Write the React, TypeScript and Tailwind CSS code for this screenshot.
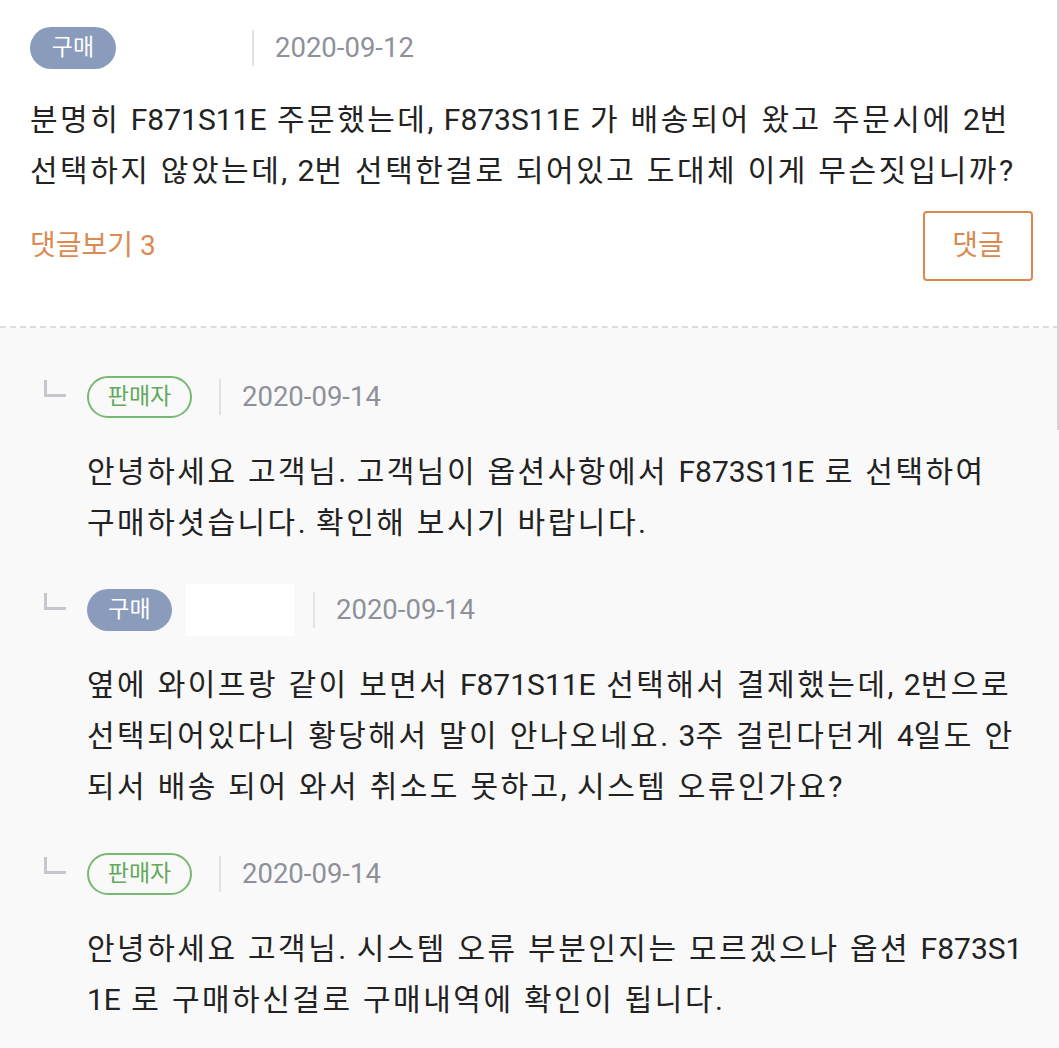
const FONT = "font-['Roboto','Noto_Sans_CJK_KR',sans-serif]";

function BuyerBadge({ small }: { small?: boolean }) {
  return (
    <span
      className={`flex h-[42px] ${small ? "w-[85px]" : "w-[86px]"} items-center justify-center rounded-full bg-[#8a9bbb] text-[23px] text-white`}
    >
      구매
    </span>
  );
}

function SellerBadge() {
  return (
    <span className="flex h-[42px] w-[105px] items-center justify-center rounded-full border-2 border-[#79b873] text-[23px] text-[#62a95c]">
      판매자
    </span>
  );
}

function Divider() {
  return <span className="block h-[36px] w-[2px] bg-[#e2e2e4]" />;
}

function DateText({ children }: { children: string }) {
  return <span className="text-[27.5px] text-[#8e9199]">{children}</span>;
}

function Corner() {
  return <span className="block h-[17px] w-[22px] border-b-[3px] border-l-[3px] border-[#c5c7cd]" />;
}

// hangul runs get a bit of extra tracking, latin stays tight
function Line({ text }: { text: string }) {
  const parts = text.split(/([\uAC00-\uD7A3]+)/);
  return (
    <>
      {parts.map((p, i) =>
        i % 2 === 1 ? (
          <span key={i} className="tracking-[2.5px]">
            {p}
          </span>
        ) : (
          <span key={i}>{p}</span>
        )
      )}
    </>
  );
}

type Reply = {
  seller: boolean;
  date: string;
  lines: string[];
};

const question = [
  "분명히 F871S11E 주문했는데, F873S11E 가 배송되어 왔고 주문시에 2번",
  "선택하지 않았는데, 2번 선택한걸로 되어있고 도대체 이게 무슨짓입니까?",
];

const replies: Reply[] = [
  {
    seller: true,
    date: "2020-09-14",
    lines: [
      "안녕하세요 고객님. 고객님이 옵션사항에서 F873S11E 로 선택하여",
      "구매하셧습니다. 확인해 보시기 바랍니다.",
    ],
  },
  {
    seller: false,
    date: "2020-09-14",
    lines: [
      "옆에 와이프랑 같이 보면서 F871S11E 선택해서 결제했는데, 2번으로",
      "선택되어있다니 황당해서 말이 안나오네요. 3주 걸린다던게 4일도 안",
      "되서 배송 되어 와서 취소도 못하고, 시스템 오류인가요?",
    ],
  },
  {
    seller: true,
    date: "2020-09-14",
    lines: [
      "안녕하세요 고객님. 시스템 오류 부분인지는 모르겠으나 옵션 F873S1",
      "1E 로 구매하신걸로 구매내역에 확인이 됩니다.",
    ],
  },
];

const bodyText =
  "whitespace-nowrap text-[30px] leading-[51px] [word-spacing:3px] text-[#222222]";

function Body({ lines, className }: { lines: string[]; className: string }) {
  return (
    <p className={`${className} ${bodyText}`}>
      {lines.map((l, j) => (
        <span key={j}>
          <Line text={l} />
          {j < lines.length - 1 && <br />}
        </span>
      ))}
    </p>
  );
}

export default function App() {
  return (
    <div className={`relative min-h-[1048px] w-full bg-[#f9f9f9] ${FONT}`}>
      <div className="absolute right-0 top-0 h-[430px] w-[2px] bg-[#d4d4d4]" />

      <section className="border-b-2 border-dashed border-[#dcdcdc] bg-white pb-[45px] pl-[30px] pr-[26px] pt-[27px]">
        <div className="flex h-[42px] items-center">
          <BuyerBadge />
          <span className="ml-[136px]">
            <Divider />
          </span>
          <span className="ml-[21px]">
            <DateText>2020-09-12</DateText>
          </span>
        </div>
        <Body lines={question} className="mt-[25px]" />
        <div className="mt-[15px] flex items-center justify-between">
          <span className="text-[28px] text-[#dc8a52]">댓글보기 3</span>
          <button className="flex h-[70px] w-[110px] items-center justify-center rounded-[4px] border-2 border-[#d8894f] text-[28px] text-[#d8894f]">
            댓글
          </button>
        </div>
      </section>

      <section className="flex flex-col gap-[41px] pt-[48px]">
        {replies.map((r, i) => (
          <div key={i} className="flex">
            <div className="w-[87px] shrink-0 pl-[44px] pt-[4px]">
              <Corner />
            </div>
            <div className="flex flex-col">
              <div className="flex h-[42px] items-center">
                {r.seller ? (
                  <>
                    <SellerBadge />
                    <span className="ml-[27px]">
                      <Divider />
                    </span>
                    <span className="ml-[21px]">
                      <DateText>{r.date}</DateText>
                    </span>
                  </>
                ) : (
                  <>
                    <BuyerBadge small />
                    <span className="ml-[14px] block h-[52px] w-[108px] bg-white" />
                    <span className="ml-[19px]">
                      <Divider />
                    </span>
                    <span className="ml-[21px]">
                      <DateText>{r.date}</DateText>
                    </span>
                  </>
                )}
              </div>
              <Body lines={r.lines} className="mt-[28px]" />
            </div>
          </div>
        ))}
      </section>
    </div>
  );
}
